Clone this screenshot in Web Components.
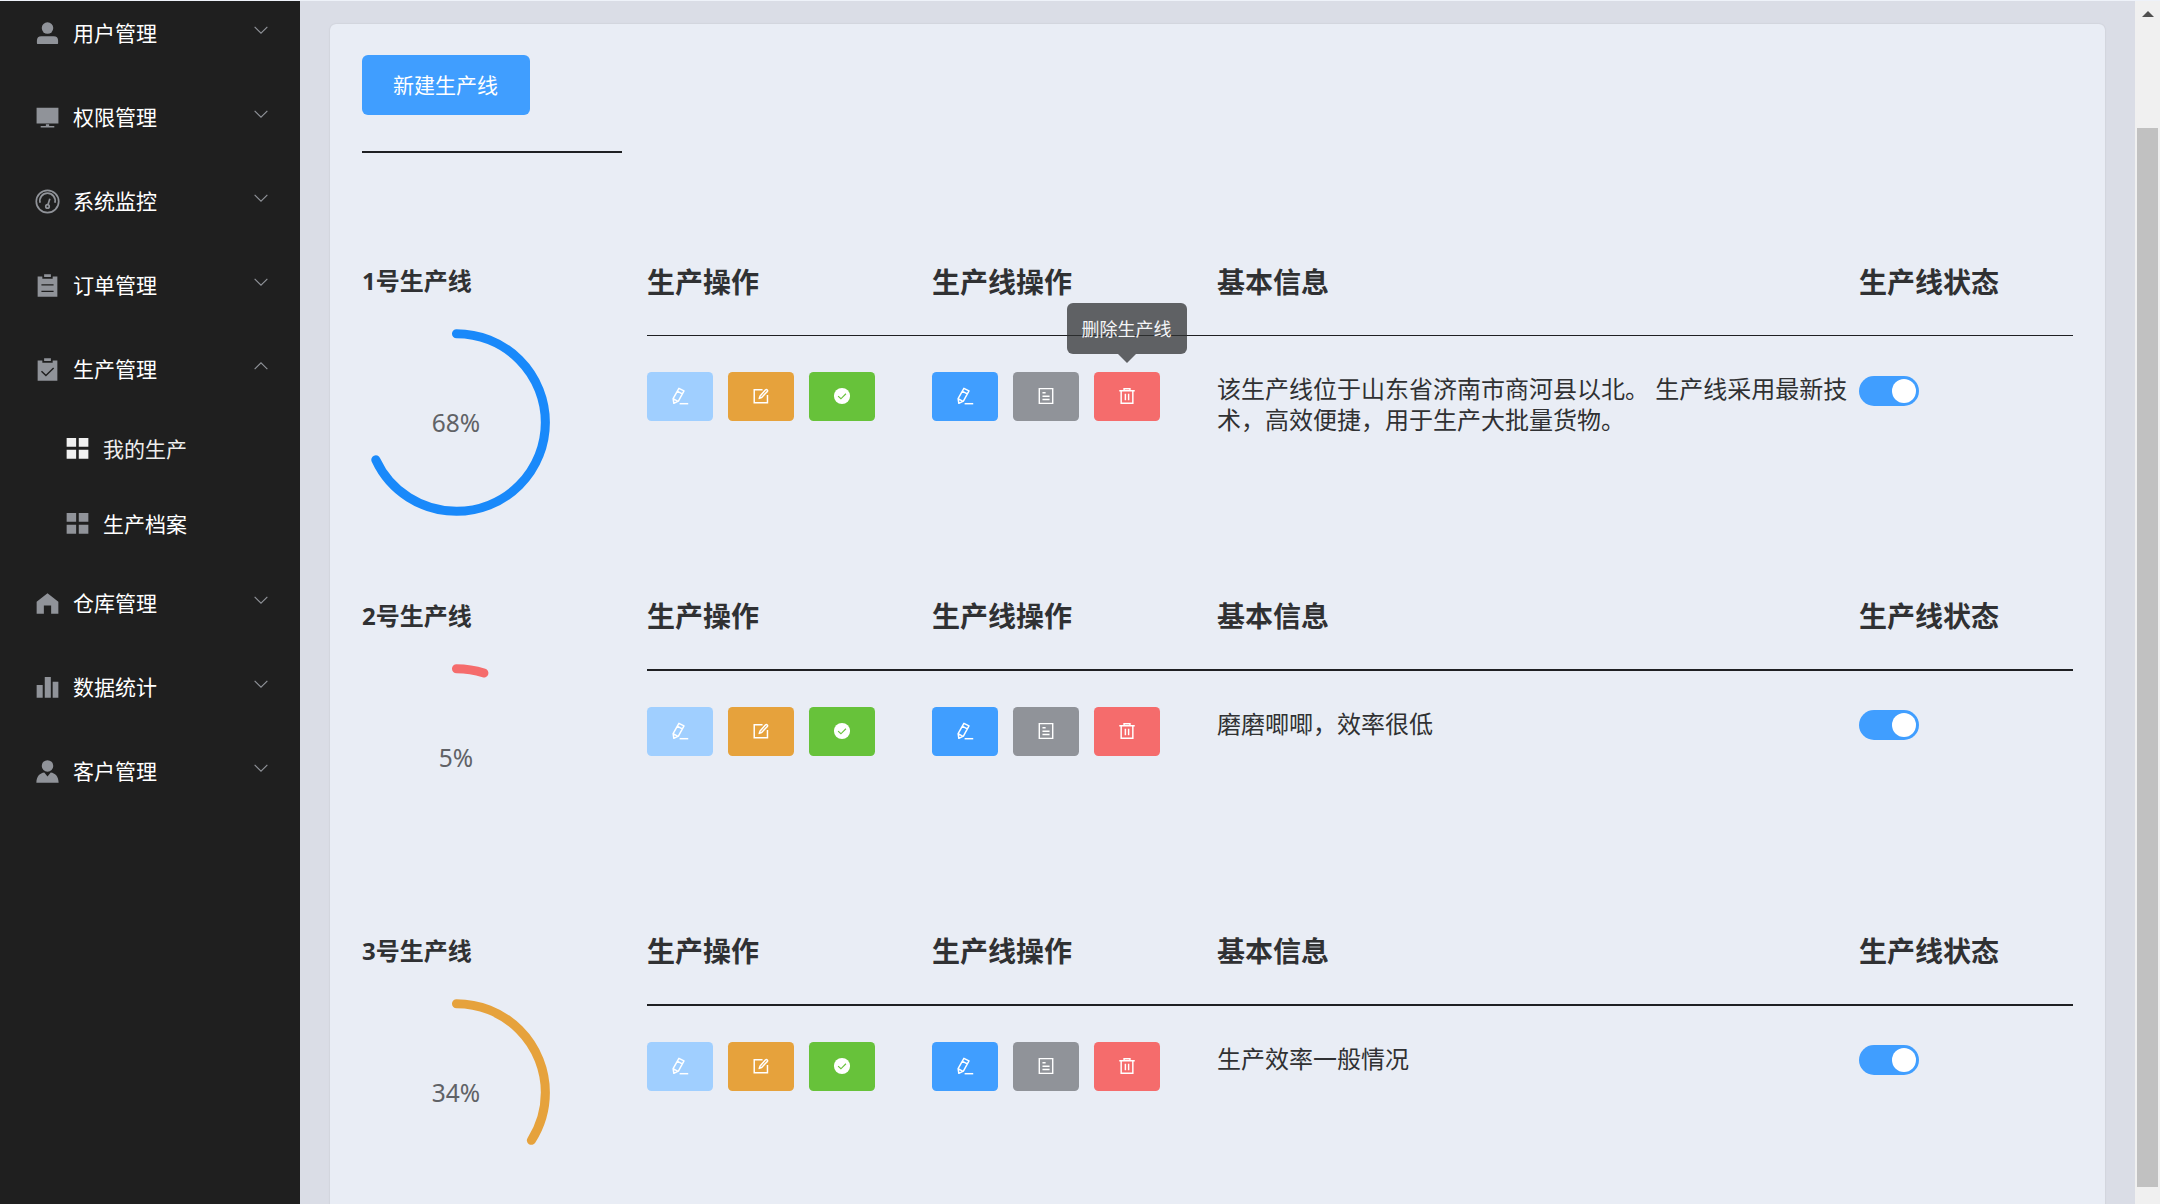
<!DOCTYPE html>
<html lang="zh-CN">
<head>
<meta charset="UTF-8">
<title>生产管理</title>
<style>
  html, body {
    margin: 0;
    height: 100%;
    overflow: hidden;
  }
  body {
    font-family: "Noto Sans", "Noto Sans CJK SC", sans-serif;
    color: #303133;
    background: #eef2f9;
  }
</style>
</head>
<body>
<app-shell>
  <side-menu slot="aside">
    <menu-item icon="user">用户管理</menu-item>
    <menu-item icon="platform">权限管理</menu-item>
    <menu-item icon="odometer">系统监控</menu-item>
    <menu-item icon="order">订单管理</menu-item>
    <menu-item icon="claim" open>生产管理</menu-item>
    <menu-item icon="menu" sub active>我的生产</menu-item>
    <menu-item icon="menu" sub>生产档案</menu-item>
    <menu-item icon="home">仓库管理</menu-item>
    <menu-item icon="data">数据统计</menu-item>
    <menu-item icon="custom">客户管理</menu-item>
  </side-menu>
  <content-card>
    <new-button slot="toolbar">新建生产线</new-button>
    <production-line name="1号生产线" percent="68" color="#1989fa" thin tip="删除生产线">该生产线位于山东省济南市商河县以北。 生产线采用最新技术，高效便捷，用于生产大批量货物。</production-line>
    <production-line name="2号生产线" percent="5" color="#f56c6c">磨磨唧唧，效率很低</production-line>
    <production-line name="3号生产线" percent="34" color="#e6a23c">生产效率一般情况</production-line>
  </content-card>
  <scroll-bar slot="scroll"></scroll-bar>
</app-shell>

<script>
// All icons share a 1024 grid
const ICONS = {
  user: '<circle cx="512" cy="308" r="218"/><path d="M110 868V790Q110 620 280 620H744Q914 620 914 790V868Q914 914 868 914H156Q110 914 110 868Z"/>',
  platform: '<path d="M98 138H926V736H98ZM450 770H574V830H770V890H254V830H450Z"/>',
  odometer: '<g fill="none" stroke="currentColor" stroke-width="64"><circle cx="512" cy="512" r="425"/><path d="M232 560A290 290 0 1 1 792 560"/><circle cx="512" cy="700" r="66"/><path d="M530 632L600 410"/></g>',
  order: '<path fill-rule="evenodd" d="M138 170H316V254H708V170H886V938H138ZM282 460V510H742V460ZM282 710V760H742V710ZM384 90H640V190H384Z"/>',
  claim: '<path d="M138 170H316V254H708V170H886V938H138ZM384 90H640V190H384Z"/><path d="M284 574L452 740L744 452" fill="none" stroke="#1f1f1f" stroke-width="54"/>',
  menu: '<path d="M100 110H460V450H100ZM560 110H924V450H560ZM100 560H460V900H100ZM560 560H924V900H560Z"/>',
  home: '<path d="M512 120L924 450V900H650V590H374V900H100V450Z"/>',
  data: '<path d="M100 420H330V900H100ZM408 110H638V900H408ZM708 290H924V900H708Z"/>',
  custom: '<circle cx="512" cy="300" r="218"/><path d="M90 938C90 690 230 570 390 550L512 704L634 550C794 570 934 690 934 938Z"/>',
  down: '<path d="M150 330L512 690L874 330" fill="none" stroke="currentColor" stroke-width="64"/>',
  up: '<path d="M150 690L512 330L874 690" fill="none" stroke="currentColor" stroke-width="64"/>',
  edit: '<g fill="none" stroke="currentColor" stroke-width="84" stroke-linejoin="round"><path d="M450 75L740 225L420 800L160 930L120 660ZM350 240L640 395M140 680L400 820"/><path d="M490 950H980"/></g>',
  editOutline: '<g fill="none" stroke="currentColor" stroke-width="84"><path d="M600 150H126V900H880V450"/><path d="M460 510L760 175Q820 120 868 170T855 275L550 600L410 650Z" stroke-linejoin="round"/></g>',
  success: '<circle cx="512" cy="512" r="460"/><path d="M290 520L450 670L735 385" fill="none" stroke="#67c23a" stroke-width="64"/>',
  tickets: '<g fill="none" stroke="currentColor" stroke-width="80"><path d="M130 90H894V934H130Z"/><path d="M310 330H490M310 530H714M310 710H714"/></g>',
  delete: '<g fill="none" stroke="currentColor" stroke-width="84"><path d="M72 210H952M180 210V925H844V210M345 200V95H679V200M420 390V750M604 390V750"/></g>'
};

const icon = (name) => `<svg viewBox="0 0 1024 1024" fill="currentColor">${ICONS[name]}</svg>`;

class BaseElement extends HTMLElement {
  constructor() {
    super();
    this.attachShadow({ mode: "open" });
  }
  connectedCallback() {
    const template = document.createElement("template");
    template.innerHTML = `
      <style>
        * { box-sizing: border-box; }
        ${this.getStyles()}
      </style>
      ${this.getMarkup()}
    `;
    this.shadowRoot.appendChild(template.content.cloneNode(true));
  }
}

class AppShell extends BaseElement {
  getStyles() {
    return `
      :host {
        display: flex;
        height: 100vh;
        padding-top: 1px;
        box-sizing: border-box;
        overflow: hidden;
      }
      main {
        flex: 1;
        min-width: 0;
        padding: 23px 30px 0;
        background: #dadde6;
      }
    `;
  }
  getMarkup() {
    return `
      <slot name="aside"></slot>
      <main><slot></slot></main>
      <slot name="scroll"></slot>
    `;
  }
}

class SideMenu extends BaseElement {
  getStyles() {
    return `
      :host {
        display: flex;
        flex-direction: column;
        flex: none;
        width: 300px;
        background: #1f1f1f;
        color: #fff;
        overflow: hidden;
      }
      /* the page is scrolled a little into the first entry */
      nav { margin-top: -10px; }
    `;
  }
  getMarkup() {
    return `<nav><slot></slot></nav>`;
  }
}

class MenuItem extends BaseElement {
  getStyles() {
    return `
      :host {
        display: flex;
        align-items: center;
        height: 84px;
        padding: 0 30px 0 29.5px;
        box-sizing: border-box;
        font-size: 21px;
        line-height: 30px;
      }
      :host([sub]) { height: 75px; padding-left: 59.5px; }
      :host([active]) { color: #eee; }
      .icon {
        display: flex;
        justify-content: center;
        width: 36px;
        margin-right: 7.5px;
        color: #909399;
      }
      :host([active]) .icon { color: #f0f0f0; }
      .icon svg { width: 27px; height: 27px; }
      .label { flex: 1; }
      .arrow {
        display: flex;
        width: 18px;
        margin-bottom: 7px;
        color: #909399;
      }
      .arrow svg { width: 18px; height: 18px; }
    `;
  }
  getMarkup() {
    const arrow = this.hasAttribute("open") ? "up" : "down";
    return `
      <span class="icon">${icon(this.getAttribute("icon"))}</span>
      <span class="label"><slot></slot></span>
      ${this.hasAttribute("sub") ? "" : `<span class="arrow">${icon(arrow)}</span>`}
    `;
  }
}

class ContentCard extends BaseElement {
  getStyles() {
    return `
      :host {
        display: block;
        height: 1300px;
        padding: 31px 32px;
        box-sizing: border-box;
        border-radius: 6px;
        background: #e9edf5;
        box-shadow: 0 0 2px rgba(0, 0, 0, .12);
      }
      .rule {
        width: 260px;
        height: 2px;
        margin: 36px 0 93px;
        background: #1f2023;
      }
    `;
  }
  getMarkup() {
    return `
      <slot name="toolbar"></slot>
      <div class="rule"></div>
      <slot></slot>
    `;
  }
}

class NewButton extends BaseElement {
  getStyles() {
    return `
      :host { display: flex; }
      button {
        width: 168px;
        height: 60px;
        padding: 0 1px 0 0;
        border: 0;
        border-radius: 6px;
        background: #409eff;
        color: #fff;
        font: inherit;
        font-size: 21px;
        line-height: 30px;
      }
    `;
  }
  getMarkup() {
    return `<button><slot></slot></button>`;
  }
}

class ProgressCircle extends BaseElement {
  getStyles() {
    return `
      :host {
        display: grid;
        place-items: center;
        width: 189px;
        height: 189px;
      }
      svg, span { grid-area: 1 / 1; }
      svg { width: 189px; height: 189px; }
      span { padding-right: 1px; font-size: 24.5px; line-height: 30px; color: #606266; }
    `;
  }
  getMarkup() {
    const percent = this.getAttribute("percent");
    const length = 2 * Math.PI * 47;
    return `
      <svg viewBox="0 0 100 100">
        <path d="M50 50m0 -47a47 47 0 1 1 0 94a47 47 0 1 1 0 -94" fill="none"
          stroke="${this.getAttribute("color")}" stroke-width="4.8" stroke-linecap="round"
          stroke-dasharray="${length * percent / 100} ${length}"/>
      </svg>
      <span>${percent}%</span>
    `;
  }
}

class IconButton extends BaseElement {
  getStyles() {
    return `
      :host { display: block; position: relative; }
      button {
        display: flex;
        align-items: center;
        justify-content: center;
        width: 66px;
        height: 49px;
        padding: 0 0 1px;
        border: 0;
        border-radius: 4.5px;
        background: ${this.getAttribute("color")};
        color: #fff;
      }
      svg { width: 18px; height: 18px; }
      .tip {
        position: absolute;
        left: 50%;
        bottom: calc(100% + 18px);
        display: flex;
        align-items: center;
        justify-content: center;
        width: 120px;
        height: 51px;
        padding: 0 1px 2px 0;
        transform: translateX(-50%);
        border-radius: 6px;
        background: rgba(48, 49, 51, .75);
        color: #f4f5f7;
        font-size: 18px;
        white-space: nowrap;
      }
      .tip::after {
        content: "";
        position: absolute;
        top: 100%;
        border: 9px solid transparent;
        border-bottom: 0;
        border-top-color: rgba(48, 49, 51, .75);
      }
    `;
  }
  getMarkup() {
    const tip = this.getAttribute("tip");
    return `
      <button>${icon(this.getAttribute("icon"))}</button>
      ${tip ? `<div class="tip">${tip}</div>` : ""}
    `;
  }
}

class ToggleSwitch extends BaseElement {
  getStyles() {
    return `
      :host {
        display: flex;
        justify-content: flex-end;
        width: 60px;
        height: 30px;
        padding: 3px;
        box-sizing: border-box;
        border-radius: 15px;
        background: #409eff;
      }
      i { width: 24px; height: 24px; border-radius: 50%; background: #fff; }
    `;
  }
  getMarkup() {
    return `<i></i>`;
  }
}

class ProductionLine extends BaseElement {
  getStyles() {
    return `
      :host {
        display: grid;
        grid-template-columns: 285px 1fr;
        height: 335px;
      }
      h3, h4 { margin: 0; line-height: 40px; }
      h3 { font-size: 28px; }
      h4 { font-size: 24px; }
      .left, .right { padding-top: 15px; }
      progress-circle { margin-top: 27px; }
      .cols {
        display: grid;
        grid-template-columns: 285px 285px 642px 1fr;
      }
      .rule {
        height: 2px;
        margin: 33px 0 36px;
        background: #1f2023;
      }
      .ops { display: flex; gap: 15px; }
      p {
        margin: 1px 0 0;
        font-size: 24px;
        line-height: 31px;
      }
      toggle-switch { margin-top: 3px; }
      :host([thin]) .right { padding-top: 16px; }
      :host([thin]) .rule { height: 1px; }
      :host([thin]) toggle-switch { margin-top: 4px; }
    `;
  }
  getMarkup() {
    const tip = this.getAttribute("tip");
    return `
      <div class="left">
        <h4>${this.getAttribute("name")}</h4>
        <progress-circle percent="${this.getAttribute("percent")}" color="${this.getAttribute("color")}"></progress-circle>
      </div>
      <div class="right">
        <div class="cols">
          <h3>生产操作</h3>
          <h3>生产线操作</h3>
          <h3>基本信息</h3>
          <h3>生产线状态</h3>
        </div>
        <div class="rule"></div>
        <div class="cols">
          <div class="ops">
            <icon-button icon="edit" color="#a0cfff"></icon-button>
            <icon-button icon="editOutline" color="#e6a23c"></icon-button>
            <icon-button icon="success" color="#67c23a"></icon-button>
          </div>
          <div class="ops">
            <icon-button icon="edit" color="#409eff"></icon-button>
            <icon-button icon="tickets" color="#909399"></icon-button>
            <icon-button icon="delete" color="#f56c6c" ${tip ? `tip="${tip}"` : ""}></icon-button>
          </div>
          <p><slot></slot></p>
          <toggle-switch></toggle-switch>
        </div>
      </div>
    `;
  }
}

class ScrollBar extends BaseElement {
  getStyles() {
    return `
      :host {
        display: flex;
        flex-direction: column;
        align-items: center;
        flex: none;
        width: 25px;
        padding-top: 10px;
        box-sizing: border-box;
        background: #f0f0f0;
      }
      .up {
        border: 6px solid transparent;
        border-top: 0;
        border-bottom-color: #505050;
      }
      .thumb {
        width: 21px;
        height: 1059px;
        margin-top: 111px;
        background: #c1c1c1;
      }
    `;
  }
  getMarkup() {
    return `<div class="up"></div><div class="thumb"></div>`;
  }
}

customElements.define("app-shell", AppShell);
customElements.define("side-menu", SideMenu);
customElements.define("menu-item", MenuItem);
customElements.define("content-card", ContentCard);
customElements.define("new-button", NewButton);
customElements.define("progress-circle", ProgressCircle);
customElements.define("icon-button", IconButton);
customElements.define("toggle-switch", ToggleSwitch);
customElements.define("production-line", ProductionLine);
customElements.define("scroll-bar", ScrollBar);
</script>
</body>
</html>
